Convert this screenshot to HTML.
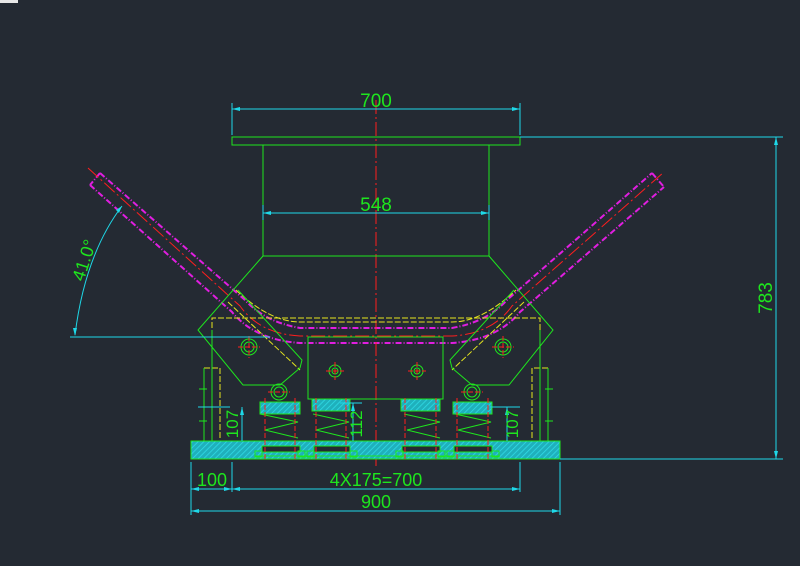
<!DOCTYPE html>
<html><head><meta charset="utf-8"><style>
html,body{margin:0;padding:0;background:#242a33;}
svg{display:block}
text{font-family:"Liberation Sans",sans-serif;fill:#1ee61e;}
</style></head><body>
<svg width="800" height="566" viewBox="0 0 800 566" xmlns="http://www.w3.org/2000/svg">
<defs>
<pattern id="h" width="4" height="4" patternUnits="userSpaceOnUse" patternTransform="rotate(45)">
<rect width="4" height="4" fill="#1fb0bc"/><path d="M0,0 L0,4" stroke="#30dde8" stroke-width="1.5"/>
</pattern>
</defs>
<rect width="800" height="566" fill="#242a33"/>
<rect x="0" y="0" width="18" height="3" fill="#e8e8e8"/>
<g fill="none" stroke-width="1">
<!-- chutes -->
<g stroke="#e01ee0" stroke-width="2" stroke-dasharray="6,2,1,2">
<path d="M100,173 L245,300 Q265,322 300,328 L452,328 Q487,322 507,300 L652,173"/>
<path d="M90,185 L232,312 Q255,340 300,343 L452,343 Q497,340 520,312 L664,187"/>
<path d="M100,173 L90,185 M652,173 L664,187"/>
</g>
<g stroke="#ff1e1e" stroke-dasharray="14,3,2,3">
<path d="M88,168 L240,306 Q260,334 300,336 L452,336 Q492,334 512,306 L664,172"/>
<path d="M376,100 L376,468"/>
</g>
<!-- yellow -->
<g stroke="#e6e61e" stroke-dasharray="6,2">
<path d="M212,440 L212,318 L540,318 L540,440"/>
<path d="M236,290 Q270,322 300,322 L452,322 Q482,322 516,290"/>
<path d="M228,302 L300,370 M524,302 L452,370"/>
<path d="M204,368 L220,368 L220,440 M548,368 L532,368 L532,440"/>
</g>
<!-- green structure -->
<g stroke="#1ee61e">
<rect x="232" y="137" width="288" height="8"/>
<path d="M263,145 L263,256 L489,256 L489,145"/>
<path d="M263,256 L198,330 L243,385 L280,385 L300,368 L302,360 L238,290"/>
<path d="M489,256 L553,330 L509,385 L472,385 L452,368 L450,360 L514,290"/>
<path d="M212,330 L212,441 M540,330 L540,441"/>
<rect x="308" y="337" width="135" height="62"/>
<path d="M204,368 L204,441 M548,368 L548,441"/>
<path d="M199,389 L207,389 M199,421 L207,421 M545,389 L553,389 M545,421 L553,421"/>
<circle cx="249" cy="347" r="8"/><circle cx="249" cy="347" r="5"/>
<circle cx="503" cy="347" r="8"/><circle cx="503" cy="347" r="5"/>
<circle cx="335" cy="371" r="6"/><circle cx="335" cy="371" r="3"/>
<circle cx="417" cy="371" r="6"/><circle cx="417" cy="371" r="3"/>
<circle cx="279" cy="392" r="8"/><circle cx="279" cy="392" r="5"/>
<circle cx="472" cy="392" r="8"/><circle cx="472" cy="392" r="5"/>
<path d="M260,414 L298,422 L265,430 L298,438 M313,414 L349,422 L316,430 L349,438 M404,414 L440,422 L407,430 L440,438 M455,414 L491,422 L458,430 L491,438"/>
</g>
<g stroke="#1ee61e" fill="url(#h)">
<rect x="260" y="402" width="40" height="12"/><rect x="312" y="399" width="38" height="12"/>
<rect x="401" y="399" width="39" height="12"/><rect x="453" y="402" width="39" height="12"/>
</g>
<rect x="191" y="441" width="369" height="18" fill="url(#h)" stroke="#1ee61e"/>
<g stroke="#1ee61e" fill="#242a33">
<rect x="262" y="446" width="38" height="6"/><rect x="314" y="446" width="36" height="6"/>
<rect x="402" y="446" width="38" height="6"/><rect x="454" y="446" width="38" height="6"/>
</g>
<path d="M255,456 L500,456" stroke="#1ee61e"/>
<g stroke="#1ee61e" fill="none">
<rect x="255" y="451" width="7" height="6"/><rect x="298" y="451" width="7" height="6"/>
<rect x="307" y="451" width="7" height="6"/><rect x="350" y="451" width="7" height="6"/>
<rect x="396" y="451" width="7" height="6"/><rect x="438" y="451" width="7" height="6"/>
<rect x="447" y="451" width="7" height="6"/><rect x="492" y="451" width="7" height="6"/>
</g>
<!-- red spring centerlines -->
<g stroke="#ff1e1e" stroke-dasharray="5,2">
<path d="M265,398 L265,460 M295,398 L295,460 M316,398 L316,460 M346,398 L346,460 M405,398 L405,460 M436,398 L436,460 M457,398 L457,460 M488,398 L488,460"/>
<path d="M238,347 L260,347 M249,336 L249,358 M492,347 L514,347 M503,336 L503,358 M326,371 L344,371 M335,362 L335,380 M408,371 L426,371 M417,362 L417,380 M268,392 L290,392 M461,392 L483,392"/>
</g>
<!-- cyan dims -->
<g stroke="#1ed8e8">
<path d="M232,103 L232,135 M520,103 L520,135 M232,109 L520,109"/>
<path d="M263,205 L263,220 M489,205 L489,220 M263,213 L489,213"/>
<path d="M520,137 L783,137 M560,459 L783,459 M776,137 L776,459"/>
<path d="M70,337 L270,337"/>
<path d="M75,335 Q85,255 122,206"/>
<path d="M191,462 L191,515 M232,462 L232,492 M520,462 L520,492 M560,462 L560,515"/>
<path d="M191,489 L520,489 M191,511 L560,511"/>
<path d="M198,407 L230,407 M490,407 L520,407 M340,403 L362,403"/>
<path d="M242,407 L242,441 M507,407 L507,441 M353,403 L353,441"/>
</g>
<g fill="#1ed8e8">
<path d="M232,109 l8,-2 v4z M520,109 l-8,-2 v4z M263,213 l8,-2 v4z M489,213 l-8,-2 v4z M776,137 l-2,8 h4z M776,459 l-2,-8 h4z M191,489 l8,-2 v4z M520,489 l-8,-2 v4z M232,489 l-8,-2 v4z M232,489 l8,-2 v4z M191,511 l8,-2 v4z M560,511 l-8,-2 v4z M75,336 l-2,-8 h4z M122,206 l-6,4 3,3z M242,407 l-2,8 h4z M507,407 l-2,8 h4z M353,403 l-2,8 h4z"/>
</g>
</g>
<text x="376" y="107" font-size="19" text-anchor="middle">700</text>
<text x="376" y="211" font-size="19" text-anchor="middle">548</text>
<text x="376" y="486" font-size="18" text-anchor="middle">4X175=700</text>
<text x="212" y="486" font-size="18" text-anchor="middle">100</text>
<text x="376" y="508" font-size="18" text-anchor="middle">900</text>
<text transform="translate(772,298) rotate(-90)" font-size="19" text-anchor="middle">783</text>
<text transform="translate(90,262) rotate(-72)" font-size="18" text-anchor="middle">41.0°</text>
<text transform="translate(238,424) rotate(-90)" font-size="17" text-anchor="middle">107</text>
<text transform="translate(362,424) rotate(-90)" font-size="17" text-anchor="middle">112</text>
<text transform="translate(518,424) rotate(-90)" font-size="17" text-anchor="middle">107</text>
</svg>
</body></html>
